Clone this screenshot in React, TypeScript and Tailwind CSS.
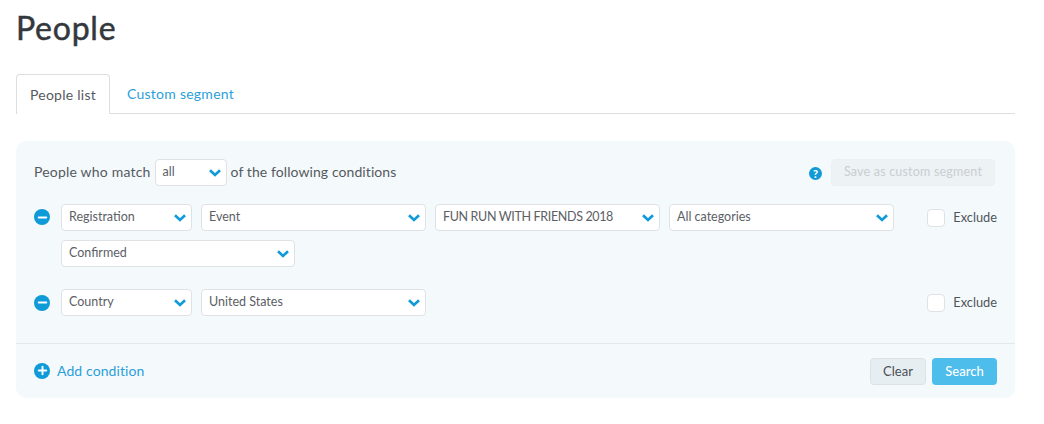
import { Plus, Minus } from "lucide-react";

function Chevron() {
  return (
    <svg viewBox="0 0 12 8" className="h-[8px] w-[12px] shrink-0 text-[#0f9ad8]" fill="none" stroke="currentColor" strokeWidth="2.6">
      <path d="M1 1.2 6 6l5-4.8" />
    </svg>
  );
}

function Select({ label, width, tight }: { label: string; width: string; tight?: boolean }) {
  return (
    <div className={`flex h-[27px] shrink-0 items-center justify-between rounded-[4px] border border-[#dfe2e4] bg-white pl-[7px] pr-[5px] text-[12.5px] text-[#5c6065] ${width}`}>
      <span className={tight ? "tracking-[-0.35px]" : ""}>{label}</span>
      <Chevron />
    </div>
  );
}

function RoundIcon({ kind }: { kind: "minus" | "plus" }) {
  return (
    <span className="grid h-[16px] w-[16px] shrink-0 place-items-center rounded-full bg-[#0f9ad8] text-white">
      {kind === "minus" ? <Minus className="h-[13px] w-[13px]" strokeWidth={3.6} /> : <Plus className="h-[13px] w-[13px]" strokeWidth={3.6} />}
    </span>
  );
}

function Exclude() {
  return (
    <div className="ml-auto flex h-[27px] shrink-0 items-center gap-[8px] pr-[18px]">
      <span className="h-[18px] w-[18px] rounded-[4px] border border-[#dfe2e4] bg-white" />
      <span className="text-[12.8px] text-[#50555b]">Exclude</span>
    </div>
  );
}

export default function App() {
  return (
    <div className="h-[424px] w-[1044px] overflow-hidden bg-white pl-[16px] pr-[29px] font-['Lato',sans-serif] text-[#33383d]">
      <h1 className="pt-[8px] text-[32px] leading-[40px] font-normal tracking-[0.75px] text-[#33383d] [-webkit-text-stroke:0.5px_#33383d]">People</h1>

      <div className="mt-[26px] flex h-[40px] border-b border-[#dcdfe1]">
        <div className="flex h-[40px] w-[94px] items-center justify-center rounded-t-[4px] border border-b-0 border-[#dcdfe1] bg-white text-[14px] tracking-[0.25px] text-[#555a60]">
          People list
        </div>
        <div className="flex items-center pl-[17px] text-[14px] tracking-[0.25px] text-[#2b9fd9]">Custom segment</div>
      </div>

      <div className="mt-[27px] h-[257px] rounded-[10px] bg-[#f4f9fc]">
        <div className="flex items-center pl-[18px] pr-[20px] pt-[18px]">
          <span className="pb-[2px] text-[14px] tracking-[0.2px] text-[#555a60]">People who match</span>
          <div className="mx-[4px]">
            <Select label="all" width="w-[72px]" />
          </div>
          <span className="pb-[2px] text-[14px] tracking-[0.08px] text-[#555a60]">of the following conditions</span>
          <span className="mt-[2px] ml-auto grid h-[13px] w-[13px] place-items-center rounded-full bg-[#0f9ad8] text-[11px] leading-none font-black text-white">?</span>
          <div className="ml-[9px] flex h-[27px] w-[164px] items-center justify-center rounded-[4px] border border-[#ebf0f3] bg-[#edf2f5] text-[12.5px] tracking-[0.2px] text-[#c9ced2]">
            Save as custom segment
          </div>
        </div>

        <div className="mt-[18px] flex pl-[18px]">
          <div className="pt-[5px]">
            <RoundIcon kind="minus" />
          </div>
          <div className="ml-[11px] flex w-[833px] flex-wrap gap-[9px]">
            <Select label="Registration" width="w-[131px]" />
            <Select label="Event" width="w-[225px]" />
            <Select label="FUN RUN WITH FRIENDS 2018" width="w-[225px]" tight />
            <Select label="All categories" width="w-[225px]" />
            <Select label="Confirmed" width="w-[234px]" />
          </div>
          <Exclude />
        </div>

        <div className="mt-[22px] flex items-center pl-[18px]">
          <RoundIcon kind="minus" />
          <div className="ml-[11px] flex gap-[9px]">
            <Select label="Country" width="w-[131px]" />
            <Select label="United States" width="w-[225px]" />
          </div>
          <Exclude />
        </div>

        <div className="mt-[27px] flex items-start border-t border-[#e3e8eb] pl-[18px] pr-[18px] pt-[14px]">
          <div className="flex h-[25px] items-center gap-[7px] text-[14px] tracking-[0.1px] text-[#2b9fd9]">
            <RoundIcon kind="plus" />
            <span className="pb-px">Add condition</span>
          </div>
          <div className="ml-auto flex gap-[6px] text-[13px]">
            <div className="flex h-[27px] w-[56px] items-center justify-center rounded-[4px] border border-[#dbe3e7] bg-[#e7eef1] text-[#4a4f55]">Clear</div>
            <div className="flex h-[27px] w-[65px] items-center justify-center rounded-[4px] bg-[#4dbdec] font-medium text-white">Search</div>
          </div>
        </div>
      </div>
    </div>
  );
}
